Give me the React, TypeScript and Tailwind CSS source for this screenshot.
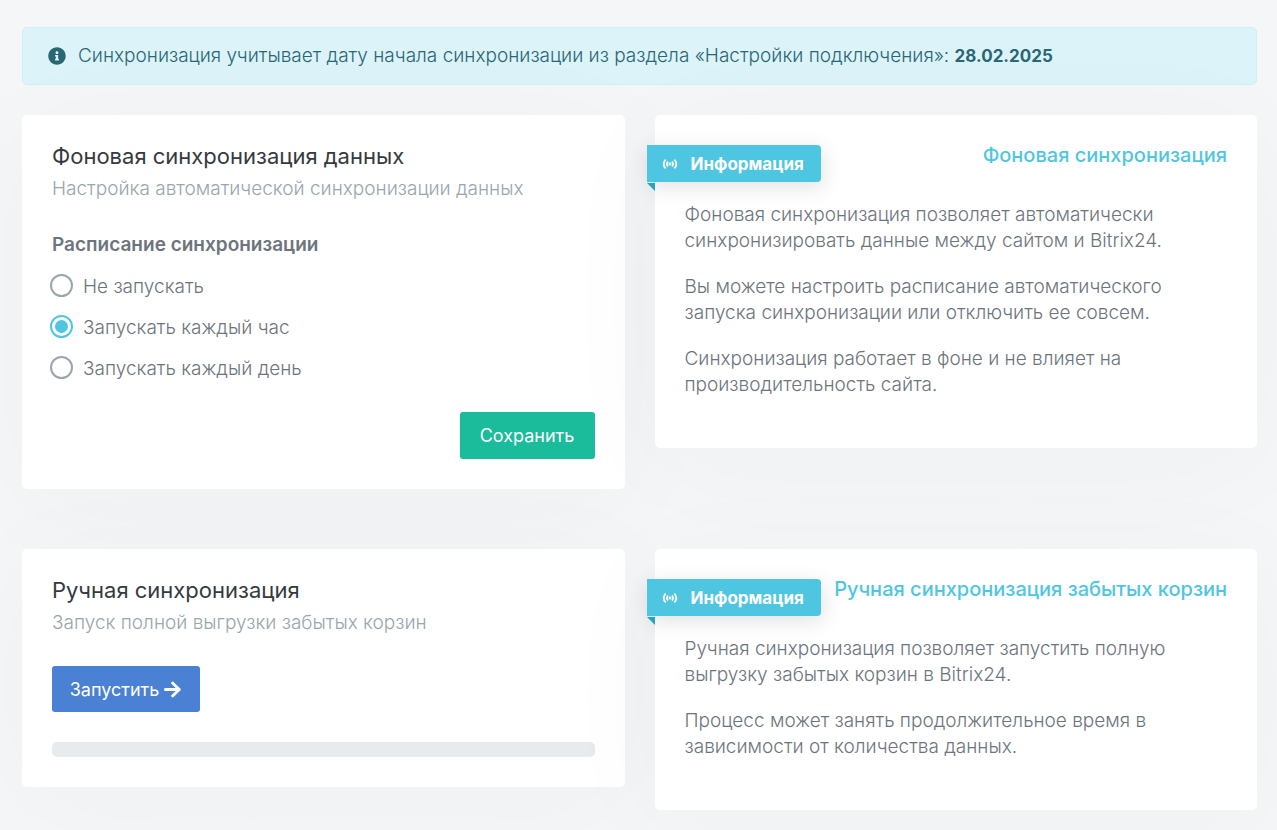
import { useState } from "react";
import type { ReactNode } from "react";
import { FaArrowRight, FaInfoCircle } from "react-icons/fa";

const scheduleOptions = [
  { value: "never", label: "Не запускать" },
  { value: "hour", label: "Запускать каждый час" },
  { value: "day", label: "Запускать каждый день" },
];

function Card({ children }: { children: ReactNode }) {
  return (
    <section className="rounded-[5px] bg-white p-[30px] shadow-[0_15px_120px_rgba(56,65,74,0.03)]">
      {children}
    </section>
  );
}

interface CardHeaderProps {
  title: string;
  subtitle: string;
}

function CardHeader({ title, subtitle }: CardHeaderProps) {
  return (
    <header>
      <h2 className="text-[22px] leading-[22px] text-[#343a40]">{title}</h2>
      <p className="mt-[9px] text-[19px] leading-[26px] font-light text-[#98a6ad]">
        {subtitle}
      </p>
    </header>
  );
}

function BroadcastIcon() {
  return (
    <svg
      viewBox="0 0 16 12"
      className="h-3 w-4"
      fill="none"
      stroke="currentColor"
      strokeWidth="1.8"
      aria-hidden="true"
    >
      <path d="M3.7 1.6C1 4.2 1 7.8 3.7 10.4M12.3 1.6C15 4.2 15 7.8 12.3 10.4M6.1 3.6C4.500 5 4.500 7 6.1 8.400M9.900 3.6C11.500 5 11.500 7 9.900 8.400" />
      <circle cx="8" cy="6" r="1.4" fill="currentColor" stroke="none" />
    </svg>
  );
}

interface InfoCardProps {
  title: string;
  paragraphs: string[];
}

function InfoCard({ title, paragraphs }: InfoCardProps) {
  return (
    <Card>
      <div className="flex items-start justify-between">
        <div className="relative -ml-[38px] flex h-[37px] shrink-0 items-center gap-[13px] rounded-r bg-[#4fc6e1] pr-[17px] pl-[15px] text-white shadow-[2px_5px_20px_rgba(50,58,70,0.15)]">
          <BroadcastIcon />
          <span className="text-[17px] leading-[26px] font-bold">
            Информация
          </span>
          {/* folded ribbon tail */}
          <span className="absolute top-[38px] left-0 border-t-8 border-l-8 border-t-[#21a5c2] border-l-transparent" />
        </div>
        <h3 className="text-[20px] leading-[20px] font-medium text-[#4fc6e1]">
          {title}
        </h3>
      </div>
      <div className="mt-[20px] text-[19px] leading-[26px] font-light">
        {paragraphs.map((text) => (
          <p key={text} className="mb-[20px] max-w-[500px]">
            {text}
          </p>
        ))}
      </div>
    </Card>
  );
}

export default function App() {
  const [schedule, setSchedule] = useState("hour");

  return (
    <main className="min-h-screen bg-[#f5f6f8] pt-[27px] pr-5 pb-5 pl-[22px] font-['Inter','Noto_Sans',sans-serif] text-[#6c757d]">
      <div
        role="alert"
        className="flex min-h-[58px] items-center gap-3 rounded-[5px] border border-[#cdf0f7] bg-[#dcf4f9] px-[25px] text-[19px] leading-[26px] font-light text-[#296775]"
      >
        <FaInfoCircle className="size-[18px] shrink-0" />
        <p>
          Синхронизация учитывает дату начала синхронизации из раздела
          «Настройки подключения»:{" "}
          <strong className="text-[17px] font-bold">28.02.2025</strong>
        </p>
      </div>

      <div className="mt-[30px] grid grid-cols-2 items-start gap-x-[30px] gap-y-[60px]">
        <Card>
          <CardHeader
            title="Фоновая синхронизация данных"
            subtitle="Настройка автоматической синхронизации данных"
          />
          <form onSubmit={(e) => e.preventDefault()}>
            <fieldset className="mt-[30px]">
              <legend className="text-[19px] leading-[26px] font-semibold">
                Расписание синхронизации
              </legend>
              <div className="mt-4 flex flex-col gap-[15px]">
                {scheduleOptions.map(({ value, label }) => (
                  <label
                    key={value}
                    className="-ml-[2px] flex items-start gap-[10px] text-[19px] leading-[26px] font-light"
                  >
                    <input
                      type="radio"
                      name="schedule"
                      value={value}
                      checked={schedule === value}
                      onChange={() => setSchedule(value)}
                      className="grid size-[23px] appearance-none place-items-center rounded-full border-2 border-[#98a6ad] before:size-[13px] before:rounded-full checked:border-[#4fc6e1] checked:before:bg-[#4fc6e1]"
                    />
                    {label}
                  </label>
                ))}
              </div>
            </fieldset>
            <div className="mt-[30px] flex justify-end">
              <button
                type="submit"
                className="h-[47px] w-[135px] rounded-[3px] bg-[#1abc9c] text-[18px] text-white"
              >
                Сохранить
              </button>
            </div>
          </form>
        </Card>

        <InfoCard
          title="Фоновая синхронизация"
          paragraphs={[
            "Фоновая синхронизация позволяет автоматически синхронизировать данные между сайтом и Bitrix24.",
            "Вы можете настроить расписание автоматического запуска синхронизации или отключить ее совсем.",
            "Синхронизация работает в фоне и не влияет на производительность сайта.",
          ]}
        />

        <Card>
          <CardHeader
            title="Ручная синхронизация"
            subtitle="Запуск полной выгрузки забытых корзин"
          />
          <button
            type="button"
            className="mt-[30px] flex h-[46px] w-[148px] items-center justify-center gap-1 rounded-[3px] bg-[#4a81d4] text-[18px] text-white"
          >
            Запустить
            <FaArrowRight className="size-[19px]" />
          </button>
          <div
            role="progressbar"
            aria-label="Ручная синхронизация"
            aria-valuenow={0}
            className="mt-[30px] h-[15px] rounded-[5px] bg-[#e7ebee]"
          />
        </Card>

        <InfoCard
          title="Ручная синхронизация забытых корзин"
          paragraphs={[
            "Ручная синхронизация позволяет запустить полную выгрузку забытых корзин в Bitrix24.",
            "Процесс может занять продолжительное время в зависимости от количества данных.",
          ]}
        />
      </div>
    </main>
  );
}
